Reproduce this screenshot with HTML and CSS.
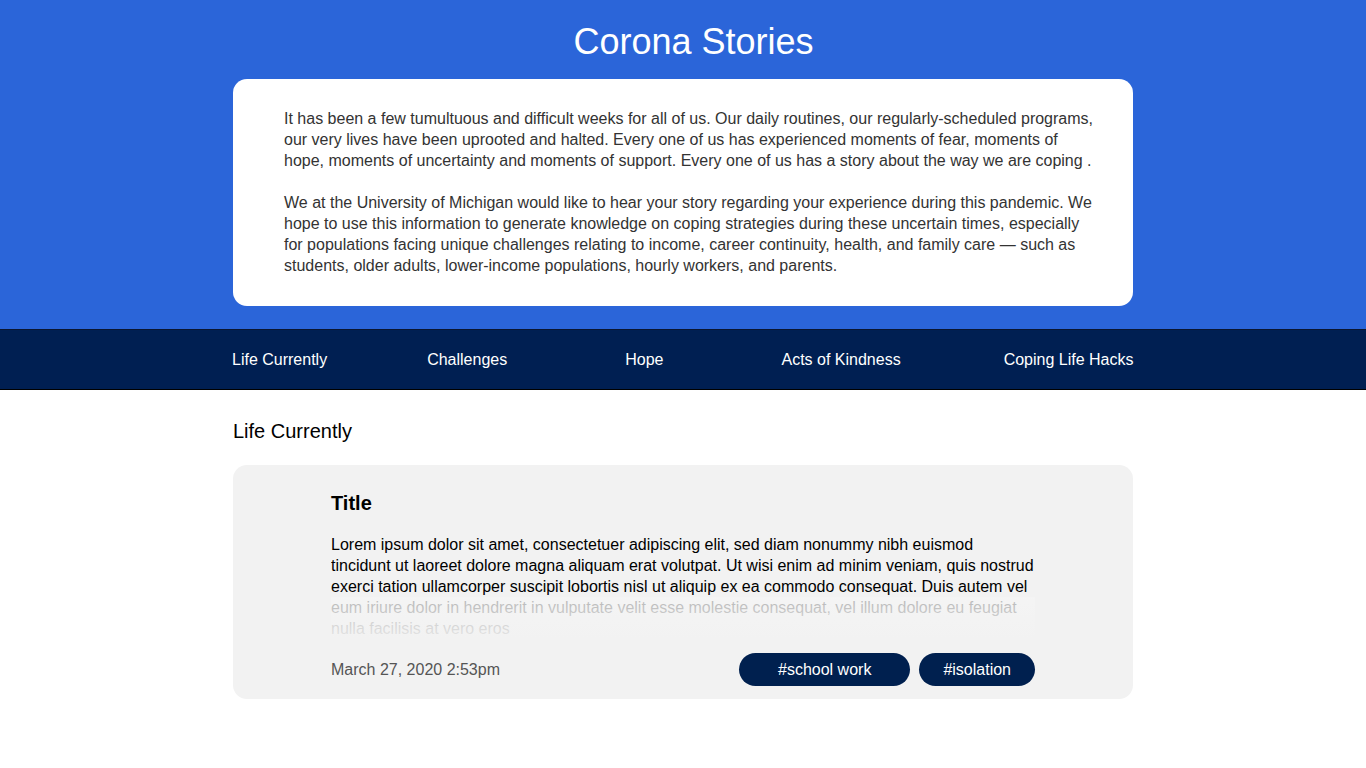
FILE: index.html
```html
<!DOCTYPE html>
<html lang="en">
<head>
<meta charset="utf-8">
<title>Corona Stories</title>
<link rel="stylesheet" href="styles.css">
</head>
<body>
<header class="hero">
  <h1 class="hero-title">Corona Stories</h1>
  <div class="intro">
    <p>It has been a few tumultuous and difficult weeks for all of us. Our daily routines, our regularly-scheduled programs, our very lives have been uprooted and halted. Every one of us has experienced moments of fear, moments of hope, moments of uncertainty and moments of support. Every one of us has a story about the way we are coping .</p>
    <p>We at the University of Michigan would like to hear your story regarding your experience during this pandemic. We hope to use this information to generate knowledge on coping strategies during these uncertain times, especially for populations facing unique challenges relating to income, career continuity, health, and family care — such as students, older adults, lower-income populations, hourly workers, and parents.</p>
  </div>
</header>
<nav class="nav">
  <div class="nav-inner">
    <a class="nav-link" href="#">Life Currently</a>
    <a class="nav-link" href="#">Challenges</a>
    <a class="nav-link" href="#">Hope</a>
    <a class="nav-link" href="#">Acts of Kindness</a>
    <a class="nav-link" href="#">Coping Life Hacks</a>
  </div>
</nav>
<main class="main">
  <h2 class="section-title">Life Currently</h2>
  <article class="story">
    <h3 class="story-title">Title</h3>
    <div class="story-body">
      <p>Lorem ipsum dolor sit amet, consectetuer adipiscing elit, sed diam nonummy nibh euismod tincidunt ut laoreet dolore magna aliquam erat volutpat. Ut wisi enim ad minim veniam, quis nostrud exerci tation ullamcorper suscipit lobortis nisl ut aliquip ex ea commodo consequat. Duis autem vel eum iriure dolor in hendrerit in vulputate velit esse molestie consequat, vel illum dolore eu feugiat nulla facilisis at vero eros</p>
    </div>
    <div class="story-footer">
      <span class="story-date">March 27, 2020 2:53pm</span>
      <div class="tags">
        <span class="tag tag-wide">#school work</span>
        <span class="tag">#isolation</span>
      </div>
    </div>
  </article>
</main>
</body>
</html>
```
FILE: styles.css
```css
* { box-sizing: border-box; }
html, body { margin: 0; padding: 0; }
body {
  font-family: "Liberation Sans", Arial, sans-serif;
  background: #ffffff;
  color: #000;
}
.hero {
  background: #2b65d9;
  padding: 21px 0 23px;
}
.hero-title {
  margin: 0 0 16px;
  padding-left: 21px;
  text-align: center;
  color: #ffffff;
  font-weight: 400;
  font-size: 36px;
  line-height: 42px;
}
.intro {
  width: 900px;
  margin: 0 auto;
  background: #ffffff;
  border-radius: 14px;
  padding: 29px 37px 30px 51px;
  color: #333333;
  font-size: 16px;
  line-height: 21px;
}
.intro p { margin: 0; }
.intro p + p { margin-top: 21px; }

.nav {
  background: #001f52;
  border-top: 1px solid #0a1630;
  border-bottom: 1px solid #000000;
  height: 61px;
}
.nav-inner {
  width: 902px;
  margin: 0 auto;
  height: 100%;
  display: flex;
  align-items: center;
  padding-top: 1px;
}
.nav-link {
  flex-shrink: 0;
  white-space: nowrap;
  color: #ffffff;
  text-decoration: none;
  font-size: 16px;
  line-height: 20px;
}
.nav-link:nth-child(1) { margin-right: 100px; }
.nav-link:nth-child(2) { margin-right: 118px; }
.nav-link:nth-child(3) { margin-right: 118px; }
.nav-link:nth-child(4) { margin-right: 103px; }

.main {
  width: 900px;
  margin: 0 auto;
  padding-top: 30px;
}
.section-title {
  margin: 0 0 22px;
  font-size: 20px;
  font-weight: 400;
  line-height: 23px;
}
.story {
  background: #f2f2f2;
  border-radius: 14px;
  padding: 27px 98px 13px;
}
.story-title {
  margin: 0 0 19px;
  font-size: 20px;
  font-weight: 700;
  line-height: 23px;
}
.story-body {
  position: relative;
  max-height: 105px;
  overflow: hidden;
  font-size: 16px;
  line-height: 21px;
}
.story-body p { margin: 0; }
.story-body::after {
  content: "";
  position: absolute;
  left: 0;
  right: 0;
  bottom: 0;
  height: 42px;
  background: linear-gradient(to bottom, rgba(245,245,245,0.74), rgba(242,242,242,0.95));
}
.story-footer {
  margin-top: 14px;
  display: flex;
  align-items: center;
  justify-content: space-between;
}
.story-date {
  color: #555555;
  font-size: 16px;
}
.tags {
  display: flex;
  gap: 9px;
}
.tag {
  background: #00204f;
  color: #ffffff;
  border-radius: 17px;
  height: 33px;
  line-height: 33px;
  padding: 0 24px;
  font-size: 16px;
}
.tag-wide { padding: 0 39px; }
```
